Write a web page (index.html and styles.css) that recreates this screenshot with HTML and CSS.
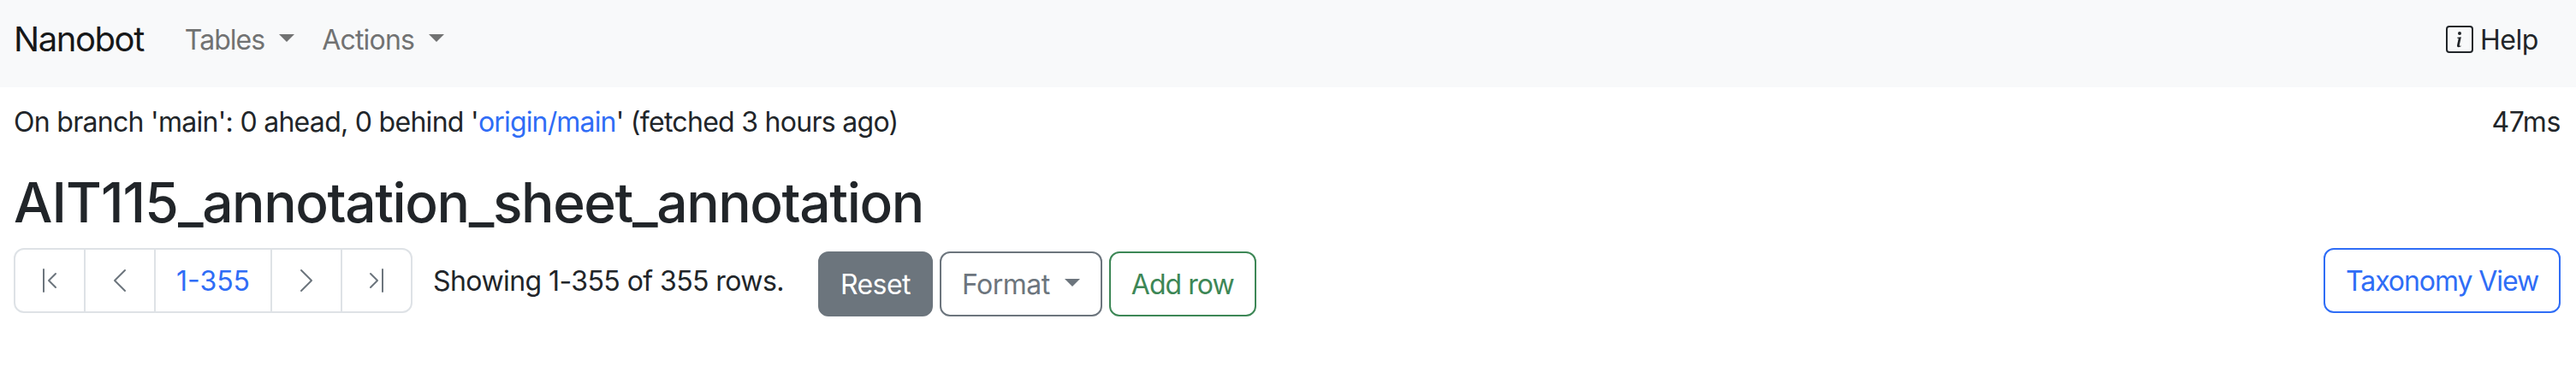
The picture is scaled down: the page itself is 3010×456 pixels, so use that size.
FILE: index.html
```html
<!DOCTYPE html>
<html lang="en">
<head>
<meta charset="utf-8">
<title>Nanobot</title>
<link rel="stylesheet" href="styles.css">
</head>
<body>
<nav class="navbar">
  <a class="brand">Nanobot</a>
  <a class="nav-link tables"><span class="label">Tables</span><i class="caret"></i></a>
  <a class="nav-link actions-link"><span class="label">Actions</span><i class="caret"></i></a>
  <a class="help"><svg class="icon" viewBox="0 0 16 16"><path d="M14 1a1 1 0 0 1 1 1v12a1 1 0 0 1-1 1H2a1 1 0 0 1-1-1V2a1 1 0 0 1 1-1zM2 0a2 2 0 0 0-2 2v12a2 2 0 0 0 2 2h12a2 2 0 0 0 2-2V2a2 2 0 0 0-2-2z"/><path d="m8.93 6.588-2.29.287-.082.38.45.083c.294.07.352.176.288.469l-.738 3.468c-.194.897.105 1.319.808 1.319.545 0 1.178-.252 1.465-.598l.088-.416c-.2.176-.492.246-.686.246-.275 0-.375-.193-.304-.533zM9 4.5a1 1 0 1 1-2 0 1 1 0 0 1 2 0"/></svg><span class="label">Help</span></a>
</nav>
<main class="container">
  <div class="status"><p class="branch">On branch 'main': 0 ahead, 0 behind '<a class="link">origin/main</a>' (fetched 3 hours ago)</p><span class="time">47ms</span></div>
  <h2 class="title"><span class="sheet-id">AIT115</span>_annotation_sheet_annotation</h2>
  <div class="toolbar">
    <div class="pagination">
      <a class="page"><svg class="icon" viewBox="0 0 16 16"><path d="M11.854 3.646a.5.5 0 0 1 0 .708L8.207 8l3.647 3.646a.5.5 0 0 1-.708.708l-4-4a.5.5 0 0 1 0-.708l4-4a.5.5 0 0 1 .708 0M4.5 1a.5.5 0 0 0-.5.5v13a.5.5 0 0 0 1 0v-13a.5.5 0 0 0-.5-.5"/></svg></a>
      <a class="page"><svg class="icon" viewBox="0 0 16 16"><path d="M11.354 1.646a.5.5 0 0 1 0 .708L5.707 8l5.647 5.646a.5.5 0 0 1-.708.708l-6-6a.5.5 0 0 1 0-.708l6-6a.5.5 0 0 1 .708 0"/></svg></a>
      <a class="page range"><span class="label">1-355</span></a>
      <a class="page"><svg class="icon" viewBox="0 0 16 16"><path d="M4.646 1.646a.5.5 0 0 1 .708 0l6 6a.5.5 0 0 1 0 .708l-6 6a.5.5 0 0 1-.708-.708L10.293 8 4.646 2.354a.5.5 0 0 1 0-.708"/></svg></a>
      <a class="page"><svg class="icon" viewBox="0 0 16 16"><path d="M4.146 3.646a.5.5 0 0 0 0 .708L7.793 8l-3.647 3.646a.5.5 0 0 0 .708.708l4-4a.5.5 0 0 0 0-.708l-4-4a.5.5 0 0 0-.708 0M11.5 1a.5.5 0 0 1 .5.5v13a.5.5 0 0 1-1 0v-13a.5.5 0 0 1 .5-.5"/></svg></a>
    </div>
    <p class="showing">Showing 1-355 of 355 rows.</p>
    <div class="actions">
      <a class="btn reset"><span class="label">Reset</span></a>
      <a class="btn format"><span class="label">Format</span><i class="caret"></i></a>
      <a class="btn add"><span class="label">Add row</span></a>
    </div>
    <a class="btn taxonomy"><span class="label">Taxonomy View</span></a>
  </div>
</main>
</body>
</html>
```
FILE: styles.css
```css
* {
  box-sizing: border-box;
}

body {
  margin: 0;
  background: #fff;
  color: #212529;
  font: 32px/48px Inter, "Liberation Sans", sans-serif;
}

p,
h2 {
  margin: 0;
}

.icon {
  display: block;
  flex: none;
  width: 32px;
  height: 32px;
  fill: currentColor;
}

.caret {
  width: 0;
  height: 0;
  margin-bottom: 3px;
  border: 9px solid transparent;
  border-top-color: currentColor;
  border-bottom: 0;
}

.label {
  padding-top: 2px;
}

.navbar {
  display: flex;
  align-items: center;
  height: 102px;
  padding: 0 44px 10px 16px;
  background: #f8f9fa;
}

.brand {
  margin-right: 48px;
  color: #171819;
  font-size: 40px;
  letter-spacing: -1.42px;
}

.nav-link {
  display: flex;
  align-items: center;
  gap: 17px;
  margin-right: 32px;
  color: #717272;
}

.tables {
  letter-spacing: -.98px;
}

.actions-link {
  letter-spacing: -.8px;
}

.help {
  display: flex;
  align-items: center;
  gap: 8px;
  margin-left: auto;
  letter-spacing: -.45px;
}

.container {
  padding: 17px 18px 0 16px;
}

.status {
  display: flex;
  justify-content: space-between;
}

.branch {
  letter-spacing: -.71px;
}

.time {
  letter-spacing: -.4px;
}

.link {
  color: #2f6df6;
  letter-spacing: -.84px;
}

.title {
  margin-top: 31px;
  font-size: 64px;
  font-weight: 500;
  line-height: 77px;
  letter-spacing: -1.39px;
}

.sheet-id {
  letter-spacing: -.9px;
}

.toolbar {
  display: flex;
  align-items: flex-start;
  margin-top: 15px;
}

.pagination {
  display: flex;
  height: 76px;
  border: 2px solid #dee2e6;
  border-radius: 12px;
  color: #6c757d;
}

.page {
  display: flex;
  align-items: center;
  padding: 0 24px;
}

.page + .page {
  border-left: 2px solid #dee2e6;
}

.range {
  color: #2f6df6;
}

.showing {
  margin: 15px 40px 0 24px;
  letter-spacing: -.57px;
}

.btn {
  display: flex;
  align-items: center;
  height: 76px;
  padding: 0 24px;
  border: 2px solid;
  border-radius: 12px;
}

.actions {
  display: flex;
  gap: 8px;
  margin-top: 4px;
}

.reset {
  border-color: #6c757d;
  background: #6c757d;
  color: #fff;
  letter-spacing: -.56px;
}

.format {
  gap: 17px;
  color: #6c757d;
  letter-spacing: -.5px;
}

.add {
  color: #3d8756;
  letter-spacing: -.94px;
}

.taxonomy {
  margin-left: auto;
  color: #2f6df6;
  letter-spacing: -1.08px;
}
```
